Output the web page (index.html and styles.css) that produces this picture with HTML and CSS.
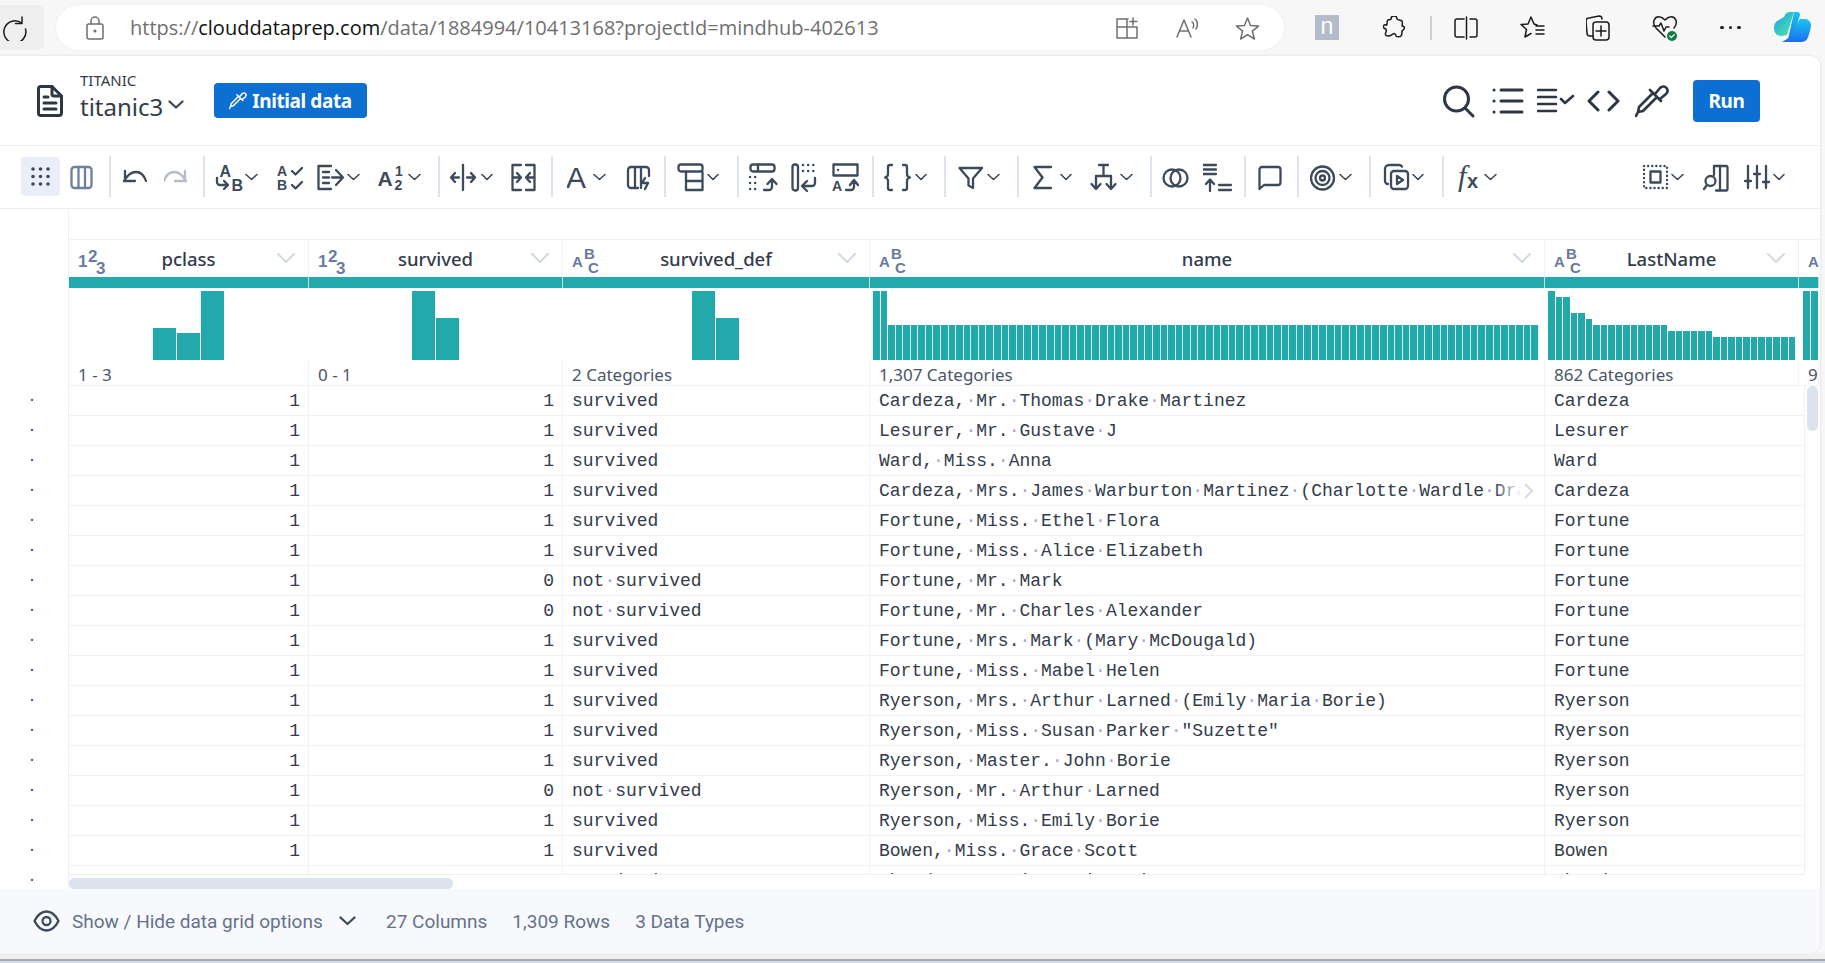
FILE: index.html
```html
<!DOCTYPE html>
<html lang="en">
<head>
<meta charset="utf-8">
<title>titanic3</title>
<link rel="stylesheet" href="styles.css">
</head>
<body>
<div class="browser">
  <div class="reload">
    <svg width="25" height="26" viewBox="0 0 25 26" class="bi"><path d="M20 2v6.500h-6.500M20 8.500A11 11 0 1 0 23.500 14"/></svg>
  </div>
  <div class="urlbar">
    <svg width="18" height="24" viewBox="0 0 18 24" class="bi gray lock"><rect x="1" y="8" width="16" height="15" rx="2"/><path d="M5 8V5a4 4 0 0 1 8 0v3"/><circle cx="9" cy="15" r=".8"/></svg>
    <div class="url"><span>https://</span><b>clouddataprep.com</b><span>/data/1884994/10413168?projectId=mindhub-402613</span></div>
    <svg width="24" height="22" viewBox="0 0 24 22" class="bi gray u1"><path d="M13 2H2v19h20V10H2M12 2v19M18 1v7M15 4.500h7"/></svg>
    <svg width="24" height="22" viewBox="0 0 24 22" class="bi gray u2"><path d="M1 20 8 3l7 17M3.500 14h9M16 5c2 1 2 4 1 6M19 2c3 2 3 7 1 10"/></svg>
    <svg width="25" height="24" viewBox="0 0 25 24" class="bi gray u3"><path d="M12.500 2l3 7.500 8 .6-6.100 5.100 2 7.800-6.900-4.300-6.900 4.300 2-7.800L1.500 10.100l8-.6z"/></svg>
  </div>
  <div class="bext">
    <span class="nbox">n</span>
    <svg width="22" height="24" viewBox="0 0 22 24" class="bi p1"><path d="M8 3a3 3 0 0 1 6 0c0 1 4 1 5 2s0 4 0 5c2 0 3 1 2 3s-2 1-2 2 0 4-1 5-4 1-5 0c0-2-2-3-3-2s-2 2-5 2-3-2-2-4 0-3-2-4 0-4 2-3 0-4 2-5 3 0 3-1z"/></svg>
    <span class="bsep"></span>
    <svg width="24" height="24" viewBox="0 0 24 24" class="bi p2"><path d="M10 3H3a2 2 0 0 0-2 2v14a2 2 0 0 0 2 2h7M16 3h5a2 2 0 0 1 2 2v14a2 2 0 0 1-2 2h-5M12.500 1v22"/></svg>
    <svg width="25" height="24" viewBox="0 0 25 24" class="bi p3"><path d="M17 9l-3-1L11 1 8 8l-7 .5 5.500 5L5 21l6-3.500M16 10h8M16 14h8M16 18h8"/></svg>
    <svg width="24" height="26" viewBox="0 0 24 26" class="bi p4"><path d="M7 21H4a3 3 0 0 1-3-3L0 6a3 3 0 0 1 3-3l10-2c2 0 3 1 3 3"/><rect x="7" y="7" width="16" height="18" rx="3"/><path d="M15 11v10M10 16h10"/></svg>
    <svg width="26" height="26" viewBox="0 0 26 26" class="bi p5"><path d="M13 22 4 13C-1 7 3 1 8 2c2 0 4 2 5 3 1-1 3-3 5-3 5-1 9 5 4 11M1 11h6l2-3 3 8 2-4h3"/><circle cx="20" cy="21" r="5" class="okc"/><path d="M17.800 21l1.600 1.600 2.800-3" class="okt"/></svg>
    <span class="dots"><i></i><i></i><i></i></span>
    <svg width="37" height="33" viewBox="0 0 37 33" class="copilot">
      <defs>
        <linearGradient id="cg1" x1="0" y1="0" x2="1" y2="1"><stop offset="0" stop-color="#1f9ce8"/><stop offset=".6" stop-color="#3ad0c0"/><stop offset="1" stop-color="#7fdc7a"/></linearGradient>
        <linearGradient id="cg2" x1="0" y1="0" x2="0" y2="1"><stop offset="0" stop-color="#1cc4f0"/><stop offset="1" stop-color="#1a6ff0"/></linearGradient>
      </defs>
      <path d="M20 1h3c2 0 3 1 3 3l-7 22c-1 3-3 5-6 5H8l5-3c1-1 2-2 2-4z" fill="url(#cg2)"/>
      <path d="M21 1h-5c-3 0-5 2-6 5L5 9c-3 1-5 4-5 8 0 5 3 8 8 8l5-1L19 4c0-2 1-3 2-3z" fill="url(#cg1)"/>
      <path d="M26 8h5c3 0 6 3 6 6 0 3-1 6-2 9-1 5-3 8-8 8H11c3 0 5-2 6-5l3-9z" fill="url(#cg2)"/>
    </svg>
  </div>
</div>

<main class="panel">
  <header class="apphead">
    <svg width="26" height="32" viewBox="0 0 26 32" class="ic thick docicon"><path d="M3.500 1.500H15L24.500 11V28a2.500 2.500 0 0 1-2.500 2.500H3.500A2.500 2.500 0 0 1 1.500 28V3.500a2 2 0 0 1 2-2z"/><path d="M15 1.500V9a2 2 0 0 0 2 2h7.500M7 12h4M7 18h12M7 24h12"/></svg>
    <div class="title">
      <div class="proj">TITANIC</div>
      <div class="dsname">titanic3<svg width="16" height="9" viewBox="0 0 16 9" class="ic"><path d="M1.500 1.500 8 7.500l6.500-6"/></svg></div>
    </div>
    <button class="pill-btn">
      <svg width="18" height="21" viewBox="0 0 34 40" class="ic white"><path d="M18 12 4 26 3 31 1 35M3 31l5-1 14-14M15 9l11 11M20 13l5-6c2-2 5-2 6.500 0S33 11 31 13l-6 5"/></svg>
      Initial data
    </button>
    <div class="headright">
      <svg width="49" height="40" viewBox="0 0 49 40" class="ic bold"><circle cx="13.500" cy="18" r="12"/><path d="M22 27l8 8"/></svg>
      <svg width="45" height="40" viewBox="0 0 45 40" class="ic bold"><path d="M9 9h21M9 20h21M9 31h21M2 9h.1M2 20h.1M2 31h.1"/></svg>
      <svg width="50" height="40" viewBox="0 0 50 40" class="ic bold med"><path d="M1 9h18M1 16h18M1 23h18M1 30h18M24 18l4 4 8-7"/></svg>
      <svg width="48" height="40" viewBox="0 0 48 40" class="ic bold"><path d="M11 11 2 20l9 9M22 11l9 9-9 9"/></svg>
      <svg width="58" height="40" viewBox="0 0 58 40" class="ic bold med"><path d="M18 12 4 26 3 31 1 35M3 31l5-1 14-14M15 9l11 11M20 13l5-6c2-2 5-2 6.500 0S33 11 31 13l-6 5"/></svg>
      <button class="run">Run</button>
    </div>
  </header>

  <nav class="toolbar">
    <span class="gridbtn"><svg width="19" height="19" viewBox="0 0 19 19"><g class="dotgrid"><circle cx="2" cy="2" r="1.800"/><circle cx="9.500" cy="2" r="1.800"/><circle cx="17" cy="2" r="1.800"/><circle cx="2" cy="9.500" r="1.800"/><circle cx="9.500" cy="9.500" r="1.800"/><circle cx="17" cy="9.500" r="1.800"/><circle cx="2" cy="17" r="1.800"/><circle cx="9.500" cy="17" r="1.800"/><circle cx="17" cy="17" r="1.800"/></g></svg></span>
    <svg width="39" height="40" viewBox="0 0 39 40" class="ic slate"><rect x="1.500" y="10" width="20" height="21" rx="3"/><path d="M8.500 10v21M15 10v21"/></svg>
    <span class="sep s13"></span>
    <svg width="42" height="40" viewBox="0 0 42 40" class="ic"><path d="M2 24c4-7 8-9 12-9s8 3 10 9M3 14v10h10"/></svg>
    <svg width="39" height="40" viewBox="0 0 39 40" class="ic light"><path d="M22 24c-4-7-8-9-12-9S2 18 0 24M21 14v10H11"/></svg>
    <span class="sep s12"></span>
    <svg width="62" height="40" viewBox="0 0 62 40" class="ic"><text x="4.500" y="19.500" class="t16">A</text><text x="16.500" y="34" class="t16">B</text><path d="M2 21v4a3 3 0 0 0 3 3h8M9 24l4 4-4 4"/><path class="ch" d="M31 17.500l5.500 5 5.500-5"/></svg>
    <svg width="40" height="40" viewBox="0 0 40 40" class="ic"><text x="0" y="19" class="t14">A</text><text x="0" y="33" class="t14">B</text><path d="M15 14l3.500 3.500L25 11M15 28l3.500 3.500L25 25"/></svg>
    <svg width="61" height="40" viewBox="0 0 61 40" class="ic"><path d="M14 9H1.500v23H14M6 15h6M6 20.500h6M6 26h6M15 20.500h9M19 13l7 7.500-7 7.500"/><path class="ch" d="M31 17.500l5.500 5 5.500-5"/></svg>
    <svg width="60" height="40" viewBox="0 0 60 40" class="ic"><text x="-.5" y="29" class="t21">A</text><text x="17" y="19" class="t14">1</text><text x="16.500" y="33" class="t14">2</text><path class="ch" d="M31 17.500l5.500 5 5.500-5"/></svg>
    <span class="sep s12"></span>
    <svg width="61" height="40" viewBox="0 0 61 40" class="ic"><path d="M13 8v25M9 20.500H1M5 16l-4 4.500L5 25M17 20.500h8M21 16l4 4.500-4 4.500"/><path class="ch" d="M32 17.500l5 5 5-5"/></svg>
    <svg width="40" height="40" viewBox="0 0 40 40" class="ic"><path d="M10 8H1.500v25H10M15 8h8.500v25H15M1.500 20.500h8M6 16l4 4.500L6 25M23.500 20.500h-8M19 16l-4 4.500 4 4.500"/></svg>
    <span class="sep s16"></span>
    <svg width="59" height="40" viewBox="0 0 59 40" class="ic"><text x="-1" y="31" class="t30">A</text><path class="ch" d="M27 17.500l5.500 5 5.500-5"/></svg>
    <svg width="38" height="40" viewBox="0 0 38 40" class="ic"><path d="M12 31H5a3 3 0 0 1-3-3V13a3 3 0 0 1 3-3h15a3 3 0 0 1 3 3v6M9 10v21M15 10v21M19 21l-3 5h6l-3 6" /></svg>
    <span class="sep s13"></span>
    <svg width="60" height="40" viewBox="0 0 60 40" class="ic"><rect x="1.500" y="7.500" width="24" height="7" rx="2.500"/><path d="M9 15v18h16.500V15M9 24h16.500"/><path class="ch" d="M31 17.500l5 5 5-5"/></svg>
    <span class="sep s12"></span>
    <svg width="42" height="40" viewBox="0 0 42 40" class="ic"><rect x="1.500" y="7.500" width="24" height="7" rx="2.500"/><path d="M9 8v6M15 33h5a3 3 0 0 0 3-3v-7M18.500 27l4.500-5 4.500 5"/><path class="dotted" d="M1 20h8M1 26h8M1 32h8"/></svg>
    <svg width="41" height="40" viewBox="0 0 41 40" class="ic"><rect x="1.500" y="7.500" width="5.500" height="26" rx="2.500"/><path d="M24 21v5a3 3 0 0 1-3 3H12M16 24l-5 5 5 5"/><path class="dotted" d="M12 8h14M12 14h14"/></svg>
    <svg width="40" height="40" viewBox="0 0 40 40" class="ic"><path d="M1.500 7.500h24v11h-24zM6 13h.1"/><text x="0" y="34" class="t14">A</text><path d="M14 33h5a3 3 0 0 0 3-3v-6M18 28l4-5 4 5"/></svg>
    <span class="sep s12"></span>
    <svg width="60" height="40" viewBox="0 0 60 40" class="ic"><path d="M8 8H6a2 2 0 0 0-2 2v7c0 2-1 3-3 3.500C3 21 4 22 4 24v7a2 2 0 0 0 2 2h2M19 8h2a2 2 0 0 1 2 2v7c0 2 1 3 3 3.500-2 .5-3 1.500-3 3.500v7a2 2 0 0 1-2 2h-2"/><path class="ch" d="M32 17.500l5 5 5-5"/></svg>
    <span class="sep s14"></span>
    <svg width="59" height="40" viewBox="0 0 59 40" class="ic"><path d="M1.500 11h22.500l-9 10.500V31l-4.500-2.500v-7z"/><path class="ch" d="M30 17.500l5.500 5 5.500-5"/></svg>
    <span class="sep s16"></span>
    <svg width="57" height="40" viewBox="0 0 57 40" class="ic"><path d="M18 10H1.500l8 10.500-8 10.500H18"/><path class="ch" d="M28 17.500l5 5 5-5"/></svg>
    <svg width="60" height="40" viewBox="0 0 60 40" class="ic"><path d="M9 8h9M13.500 8v11M6 32V19h15v13M1.500 27l4.500 5 4.500-5M16.500 27l4.500 5 4.500-5"/><path class="ch" d="M31 17.500l5.500 5 5.500-5"/></svg>
    <span class="sep s12"></span>
    <svg width="41" height="40" viewBox="0 0 41 40" class="ic"><circle cx="10" cy="21" r="8.500"/><circle cx="17" cy="21" r="8.500"/></svg>
    <svg width="41" height="40" viewBox="0 0 41 40" class="ic"><path d="M0 8h13M0 12.500h13M0 17h13M7 34V23M3 27l4-4.500 4 4.500M16 28h12M16 33h12"/></svg>
    <span class="sep s14"></span>
    <svg width="39" height="40" viewBox="0 0 39 40" class="ic"><path d="M4 10h16a2.500 2.500 0 0 1 2.500 2.500v13a2.500 2.500 0 0 1-2.500 2.500H6l-4.500 4V12.500A2.500 2.500 0 0 1 4 10z"/></svg>
    <span class="sep s13"></span>
    <svg width="59" height="40" viewBox="0 0 59 40" class="ic"><circle cx="12.500" cy="21" r="11.500"/><circle cx="12.500" cy="21" r="7"/><circle cx="12.500" cy="21" r="2.500"/><path class="ch" d="M30 17.500l5.500 5 5.500-5"/></svg>
    <span class="sep s14"></span>
    <svg width="59" height="40" viewBox="0 0 59 40" class="ic"><path d="M5 27a3 3 0 0 1-3-3V12a4 4 0 0 1 4-4h10a4 4 0 0 1 3 1.500"/><rect x="8" y="14" width="17" height="18" rx="3"/><path d="M14 19l6 4-6 4z"/><path class="ch" d="M30 17.500l5 5 5-5"/></svg>
    <span class="sep s14"></span>
    <svg width="60" height="40" viewBox="0 0 60 40" class="ic"><text x="2" y="29" class="tf">f</text><text x="11" y="31" class="tx">x</text><path class="ch" d="M29 17.500l5.500 5 5.500-5"/></svg>
    <span class="spacer"></span>
    <svg width="60" height="40" viewBox="0 0 60 40" class="ic"><path class="dotted2" d="M1 9h23v22H1z"/><rect x="7.500" y="14.500" width="10" height="11"/><path class="ch" d="M29 17.500l5.500 5 5.500-5"/></svg>
    <svg width="41" height="40" viewBox="0 0 41 40" class="ic"><path d="M11 9h12a1.500 1.500 0 0 1 1.500 1.500V32a1.500 1.500 0 0 1-1.500 1.500H13M11 9v9"/><circle cx="7.500" cy="24" r="5"/><path d="M4 28l-3 4M17 9v24"/></svg>
    <svg width="41" height="40" viewBox="0 0 41 40" class="ic"><path d="M4 9v22M13 9v22M22 9v22M1 24h6M10 17h6M19 25h6"/><path class="ch" d="M30 17.500l5 5 5-5"/></svg>
  </nav>

  <section class="grid">
    <div class="gutter">
      <span>·</span><span>·</span><span>·</span><span>·</span><span>·</span><span>·</span><span>·</span><span>·</span><span>·</span><span>·</span><span>·</span><span>·</span><span>·</span><span>·</span><span>·</span><span>·</span><span>·</span>
    </div>
    <div class="table">
      <div class="cols heads">
        <div class="hc"><svg width="30" height="38" viewBox="0 0 30 38" class="ty"><text x="0" y="27">1</text><text x="10" y="22">2</text><text x="18" y="34">3</text></svg><span>pclass</span><svg width="18" height="10" viewBox="0 0 18 10" class="hch"><path d="M1 1l8 8 8-8"/></svg></div>
        <div class="hc"><svg width="30" height="38" viewBox="0 0 30 38" class="ty"><text x="0" y="27">1</text><text x="10" y="22">2</text><text x="18" y="34">3</text></svg><span>survived</span><svg width="18" height="10" viewBox="0 0 18 10" class="hch"><path d="M1 1l8 8 8-8"/></svg></div>
        <div class="hc"><svg width="30" height="38" viewBox="0 0 30 38" class="ty abc"><text x="0" y="27">A</text><text x="12" y="19">B</text><text x="16" y="33">C</text></svg><span>survived_def</span><svg width="18" height="10" viewBox="0 0 18 10" class="hch"><path d="M1 1l8 8 8-8"/></svg></div>
        <div class="hc"><svg width="30" height="38" viewBox="0 0 30 38" class="ty abc"><text x="0" y="27">A</text><text x="12" y="19">B</text><text x="16" y="33">C</text></svg><span>name</span><svg width="18" height="10" viewBox="0 0 18 10" class="hch"><path d="M1 1l8 8 8-8"/></svg></div>
        <div class="hc"><svg width="30" height="38" viewBox="0 0 30 38" class="ty abc"><text x="0" y="27">A</text><text x="12" y="19">B</text><text x="16" y="33">C</text></svg><span>LastName</span><svg width="18" height="10" viewBox="0 0 18 10" class="hch"><path d="M1 1l8 8 8-8"/></svg></div>
        <div class="hc last"><svg width="30" height="38" viewBox="0 0 30 38" class="ty abc"><text x="0" y="27">A</text></svg></div>
      </div>
      <div class="cols teal"><i></i><i></i><i></i><i></i><i></i><i></i></div>
      <div class="cols hist">
        <div class="hcell"><b style="height:32px"></b><b style="height:27px"></b><b style="height:69px"></b></div>
        <div class="hcell"><b style="height:69px"></b><b style="height:42px"></b></div>
        <div class="hcell"><b style="height:69px"></b><b style="height:42px"></b></div>
        <div class="hcell many name-h"><b style="height:69px"></b><b style="height:69px"></b><em></em></div>
        <div class="hcell many last-h">
          <b style="height:69px"></b><b style="height:63px"></b><b style="height:63px"></b><b style="height:47px"></b><b style="height:47px"></b><b style="height:41px"></b>
          <b style="height:35px"></b><b style="height:35px"></b><b style="height:35px"></b><b style="height:35px"></b><b style="height:35px"></b><b style="height:35px"></b><b style="height:35px"></b><b style="height:35px"></b><b style="height:35px"></b><b style="height:35px"></b>
          <b style="height:29px"></b><b style="height:29px"></b><b style="height:29px"></b><b style="height:29px"></b><b style="height:29px"></b><b style="height:29px"></b>
          <b style="height:23px"></b><b style="height:23px"></b><b style="height:23px"></b><b style="height:23px"></b><b style="height:23px"></b><b style="height:23px"></b><b style="height:23px"></b><b style="height:23px"></b><b style="height:23px"></b><b style="height:23px"></b><b style="height:23px"></b>
        </div>
        <div class="hcell many tail-h"><b style="height:69px"></b><b style="height:69px"></b><b style="height:57px"></b></div>
      </div>
      <div class="cols labels"><div>1 - 3</div><div>0 - 1</div><div>2 Categories</div><div>1,307 Categories</div><div>862 Categories</div><div>9</div></div>
      <div class="rows">
        <div class="row"><div class="num">1</div><div class="num">1</div><div>survived</div><div>Cardeza,<i>·</i>Mr.<i>·</i>Thomas<i>·</i>Drake<i>·</i>Martinez</div><div>Cardeza</div></div>
        <div class="row"><div class="num">1</div><div class="num">1</div><div>survived</div><div>Lesurer,<i>·</i>Mr.<i>·</i>Gustave<i>·</i>J</div><div>Lesurer</div></div>
        <div class="row"><div class="num">1</div><div class="num">1</div><div>survived</div><div>Ward,<i>·</i>Miss.<i>·</i>Anna</div><div>Ward</div></div>
        <div class="row"><div class="num">1</div><div class="num">1</div><div>survived</div><div class="clip">Cardeza,<i>·</i>Mrs.<i>·</i>James<i>·</i>Warburton<i>·</i>Martinez<i>·</i>(Charlotte<i>·</i>Wardle<i>·</i>Drake)<span class="fade"><svg width="10" height="16" viewBox="0 0 10 16" class="more"><path d="M1.500 1.500 8 8l-6.500 6.500"/></svg></span></div><div>Cardeza</div></div>
        <div class="row"><div class="num">1</div><div class="num">1</div><div>survived</div><div>Fortune,<i>·</i>Miss.<i>·</i>Ethel<i>·</i>Flora</div><div>Fortune</div></div>
        <div class="row"><div class="num">1</div><div class="num">1</div><div>survived</div><div>Fortune,<i>·</i>Miss.<i>·</i>Alice<i>·</i>Elizabeth</div><div>Fortune</div></div>
        <div class="row"><div class="num">1</div><div class="num">0</div><div>not<i>·</i>survived</div><div>Fortune,<i>·</i>Mr.<i>·</i>Mark</div><div>Fortune</div></div>
        <div class="row"><div class="num">1</div><div class="num">0</div><div>not<i>·</i>survived</div><div>Fortune,<i>·</i>Mr.<i>·</i>Charles<i>·</i>Alexander</div><div>Fortune</div></div>
        <div class="row"><div class="num">1</div><div class="num">1</div><div>survived</div><div>Fortune,<i>·</i>Mrs.<i>·</i>Mark<i>·</i>(Mary<i>·</i>McDougald)</div><div>Fortune</div></div>
        <div class="row"><div class="num">1</div><div class="num">1</div><div>survived</div><div>Fortune,<i>·</i>Miss.<i>·</i>Mabel<i>·</i>Helen</div><div>Fortune</div></div>
        <div class="row"><div class="num">1</div><div class="num">1</div><div>survived</div><div>Ryerson,<i>·</i>Mrs.<i>·</i>Arthur<i>·</i>Larned<i>·</i>(Emily<i>·</i>Maria<i>·</i>Borie)</div><div>Ryerson</div></div>
        <div class="row"><div class="num">1</div><div class="num">1</div><div>survived</div><div>Ryerson,<i>·</i>Miss.<i>·</i>Susan<i>·</i>Parker<i>·</i>"Suzette"</div><div>Ryerson</div></div>
        <div class="row"><div class="num">1</div><div class="num">1</div><div>survived</div><div>Ryerson,<i>·</i>Master.<i>·</i>John<i>·</i>Borie</div><div>Ryerson</div></div>
        <div class="row"><div class="num">1</div><div class="num">0</div><div>not<i>·</i>survived</div><div>Ryerson,<i>·</i>Mr.<i>·</i>Arthur<i>·</i>Larned</div><div>Ryerson</div></div>
        <div class="row"><div class="num">1</div><div class="num">1</div><div>survived</div><div>Ryerson,<i>·</i>Miss.<i>·</i>Emily<i>·</i>Borie</div><div>Ryerson</div></div>
        <div class="row"><div class="num">1</div><div class="num">1</div><div>survived</div><div>Bowen,<i>·</i>Miss.<i>·</i>Grace<i>·</i>Scott</div><div>Bowen</div></div>
        <div class="row"><div class="num">1</div><div class="num">1</div><div>survived</div><div>Chaudanson,<i>·</i>Miss.<i>·</i>Victorine</div><div>Chaudanson</div></div>
      </div>
      <div class="hscroll"></div>
      <div class="vscroll"></div>
    </div>
  </section>

  <footer class="foot">
    <svg width="27" height="22" viewBox="0 0 27 22" class="ic eye"><path d="M1.500 11C5 4 9 1.500 13.500 1.500S22 4 25.500 11C22 18 18 20.500 13.500 20.500S5 18 1.500 11z"/><circle cx="13.500" cy="11" r="4"/></svg>
    <span class="opt">Show / Hide data grid options</span>
    <svg width="17" height="10" viewBox="0 0 17 10" class="ic fch"><path d="M1.500 1.500 8.500 8l7-6.500"/></svg>
    <span class="stat s1">27 Columns</span>
    <span class="stat s2">1,309 Rows</span>
    <span class="stat s3">3 Data Types</span>
  </footer>
</main>
<div class="taskline"></div>
</body>
</html>
```
FILE: styles.css
```css
*{box-sizing:border-box}
html,body{margin:0;padding:0}
body{width:1825px;height:963px;overflow:hidden;background:#f7f7f7;font-family:Roboto,"Noto Sans",sans-serif;color:#333c4b}

/* browser chrome */
.browser{height:56px;display:flex;align-items:flex-start;padding-top:5px}
.reload{width:44px;height:45px;background:#efefef;border-radius:0 6px 6px 0;display:flex;align-items:center;padding-left:2px;margin-right:12px}
.bi{fill:none;stroke:#1b1b1b;stroke-width:1.500;stroke-linecap:round;stroke-linejoin:round;flex:none}
.bi.gray{stroke:#6f6f6f}
.urlbar{width:1228px;height:45px;background:#fff;border-radius:23px;display:flex;align-items:center;padding-left:30px;box-shadow:0 0 2px rgba(0,0,0,.08)}
.url{font-family:"Open Sans",sans-serif;font-size:20px;margin-left:26px;width:748px;white-space:nowrap;color:#707070}
.url b{font-weight:400;color:#111}
.u1{margin-left:237px}
.u2{margin-left:37px}
.u3{margin-left:35px}
.bext{display:flex;align-items:center;height:45px;padding-left:31px}
.nbox{width:24px;height:25px;background:#b4bccb;color:#fff;font-size:23px;line-height:23px;text-align:center;font-family:"Liberation Sans",sans-serif}
.p1{margin-left:44px}
.bsep{width:2px;height:24px;background:#cfcfcf;margin-left:25px}
.p2{margin-left:22px}
.p3{margin-left:42px}
.p4{margin-left:41px}
.p5{margin-left:42px}
.okc{fill:#107c41;stroke:none}
.okt{stroke:#fff;stroke-width:1.300}
.dots{display:flex;gap:5px;margin-left:42px}
.dots i{width:3.500px;height:3.500px;border-radius:50%;background:#222}
.copilot{margin-left:33px;flex:none;margin-top:-1px}

/* panel */
.panel{width:1820px;height:897px;background:#fff;border-radius:0 10px 10px 0;display:flex;flex-direction:column;overflow:hidden;box-shadow:0 0 3px rgba(0,0,0,.12)}
.ic{fill:none;stroke:#3d4a5c;stroke-width:2.300;stroke-linecap:round;stroke-linejoin:round;flex:none}
.ic text{fill:#3d4a5c;stroke:none;font-family:"Liberation Sans",sans-serif;font-weight:700}
.ic .ch{stroke-width:1.600}
.ic.light{stroke:#b4bcc6}
.ic.slate{stroke:#6f7f9c}
.ic.white{stroke:#fff;stroke-width:2.800}
.ic.bold{stroke:#2d3644;stroke-width:3}
.ic.bold.med{stroke-width:2.600}
.ic.thick{stroke:#2d3644;stroke-width:3}
.t14{font-size:14px}
.t16{font-size:16px}
.t21{font-size:21px}
.ic .t30{font-size:30px;font-weight:400}
.ic .tf{font-family:"Liberation Serif",serif;font-style:italic;font-weight:400;font-size:30px}
.ic .tx{font-size:20px}
.dotted{stroke-dasharray:.1 5;stroke-width:2.400}
.dotted2{stroke-dasharray:.1 4;stroke-width:2.400}

.apphead{height:90px;flex:none;border-bottom:1px solid #e8ecf3;display:flex;align-items:center;padding-left:37px}
.docicon{margin-right:17px}
.title{width:104px;margin-right:30px;margin-top:-5px}
.proj{font-size:15px;line-height:18px;color:#333c4b;font-family:"Noto Sans",sans-serif}
.dsname{font-size:24px;line-height:36px;color:#333c4b;display:flex;align-items:center;gap:5px;font-family:"Noto Sans",sans-serif}
.dsname svg{margin-top:-6px}
.pill-btn{width:153px;height:35px;background:#0d6fd1;color:#fff;border:0;border-radius:4px;font:700 19px "Noto Sans",sans-serif;display:flex;align-items:center;justify-content:center;gap:5px;padding:0;letter-spacing:-.4px}
.headright{margin-left:auto;display:flex;align-items:center;padding-right:60px}
.run{width:67px;height:42px;background:#0d6fd1;color:#fff;border:0;border-radius:4px;font:700 19px "Noto Sans",sans-serif;padding:0;letter-spacing:-.4px}

.toolbar{height:63px;flex:none;border-bottom:1px solid #e8ecf3;display:flex;align-items:center;padding:0 35px 1px 21px}
.gridbtn{width:39px;height:39px;background:#e9eef8;border-radius:4px;display:flex;align-items:center;justify-content:center;margin-right:10px;flex:none}
.dotgrid{fill:#3d4a5c}
.sep{width:2px;height:41px;background:#dbe3ef;flex:none;margin-right:10px}
.s13{margin-right:11px}
.s14{margin-right:12px}
.s16{margin-right:14px}
.spacer{flex:1}

/* grid */
.grid{flex:1;display:flex;min-height:0}
.gutter{width:69px;flex:none;border-right:1px solid #eef0f4;padding-top:176px;display:flex;flex-direction:column}
.gutter span{height:30px;text-align:center;font:400 14px/30px "Liberation Mono",monospace;width:64px;color:#333c4b}
.table{width:1751px;position:relative;padding-top:30px}
.cols{display:grid;grid-template-columns:240px 254px 307px 675px 254px 20px}
.heads{height:38px;border-top:1px solid #f0f2f5}
.hc{display:grid;grid-template-columns:1fr auto 1fr;align-items:center;padding:0 13px 2px;border-right:1px solid #f0f2f5;font:500 18.500px "Noto Sans",sans-serif;color:#333c4b;overflow:hidden}
.hc .ty{margin-left:-4px;margin-bottom:-2px}
.hc.last{border:0;padding:0 0 0 9px;display:block}
.hc.last .ty{margin-left:0}
.ty{display:block}
.ty text{font:700 17px "Liberation Sans",sans-serif;fill:#6a7a9e}
.ty.abc text{font-size:15px}
.hch{fill:none;stroke:#d0d8e8;stroke-width:2;stroke-linecap:round;stroke-linejoin:round;justify-self:end}
.teal{height:11px}
.teal i{background:#22a9ab;border-right:1px solid #b9e3e3}
.hist{height:69px;margin-top:3px}
.hcell{display:flex;justify-content:center;align-items:flex-end;gap:1px;overflow:hidden;padding-right:2px}
.hcell b{display:block;width:23px;background:#22a9ab}
.many b{width:auto;flex:1}
.name-h{padding:0 6px 0 3px}
.name-h b{flex:none;width:6.600px}
.name-h em{flex:1;height:35px;background:repeating-linear-gradient(90deg,#22a9ab 0 6.570px,#d5efef 6.570px 7.570px)}
.last-h{padding:0 4px 0 3px}
.tail-h{padding:0 0 0 4px;justify-content:flex-start}
.tail-h b{flex:none;width:7px}
.labels{height:26px;border-bottom:1px solid #f0f2f5;font:400 17px/29px "Noto Sans",sans-serif;color:#4a5568}
.labels div{padding-left:9px;white-space:nowrap;overflow:hidden;border-right:1px solid #f4f5f8}
.rows{height:489px;overflow:hidden;width:1736px;border-bottom:1px solid #eef0f4;border-right:1px solid #eef0f4}
.row{display:grid;grid-template-columns:240px 254px 307px 675px 259px;height:30px;border-bottom:1px solid #f0f2f5;font:400 18px/30px "Liberation Mono",monospace;color:#333c4b;white-space:pre}
.row>div{padding:0 9px;border-right:1px solid #f0f2f5;overflow:hidden;position:relative}
.row>div:last-child{border-right:0}
.row>.num{text-align:right;padding-right:8px}
.row i{font-style:normal;color:#a9a2d8}
.fade{position:absolute;right:0;top:0;bottom:0;width:50px;background:linear-gradient(90deg,rgba(255,255,255,0),#fff 55%);display:flex;align-items:center;justify-content:flex-end;padding-right:10px}
.more{fill:none;stroke:#d0d8e8;stroke-width:1.800;stroke-linecap:round;stroke-linejoin:round}
.hscroll{width:384px;height:11px;background:#dce2ee;border-radius:6px;margin-top:3px}
.vscroll{position:absolute;left:1738px;top:177px;width:11px;height:45px;background:#dce2ee;border-radius:6px}

/* footer */
.foot{height:64px;flex:none;background:#f7f9fd;display:flex;align-items:center;padding-left:33px;font-size:19px;color:#66728a}
.eye{margin-right:12px}
.fch{margin-left:18px;margin-right:30px}
.opt{width:249px;white-space:nowrap}
.s2{margin-left:25px}
.s3{margin-left:25px}
.taskline{height:10px;background:linear-gradient(#f0f0f0 0 6px,#a9a9a9 6px 8px,#cfdcf0 8px)}
```
